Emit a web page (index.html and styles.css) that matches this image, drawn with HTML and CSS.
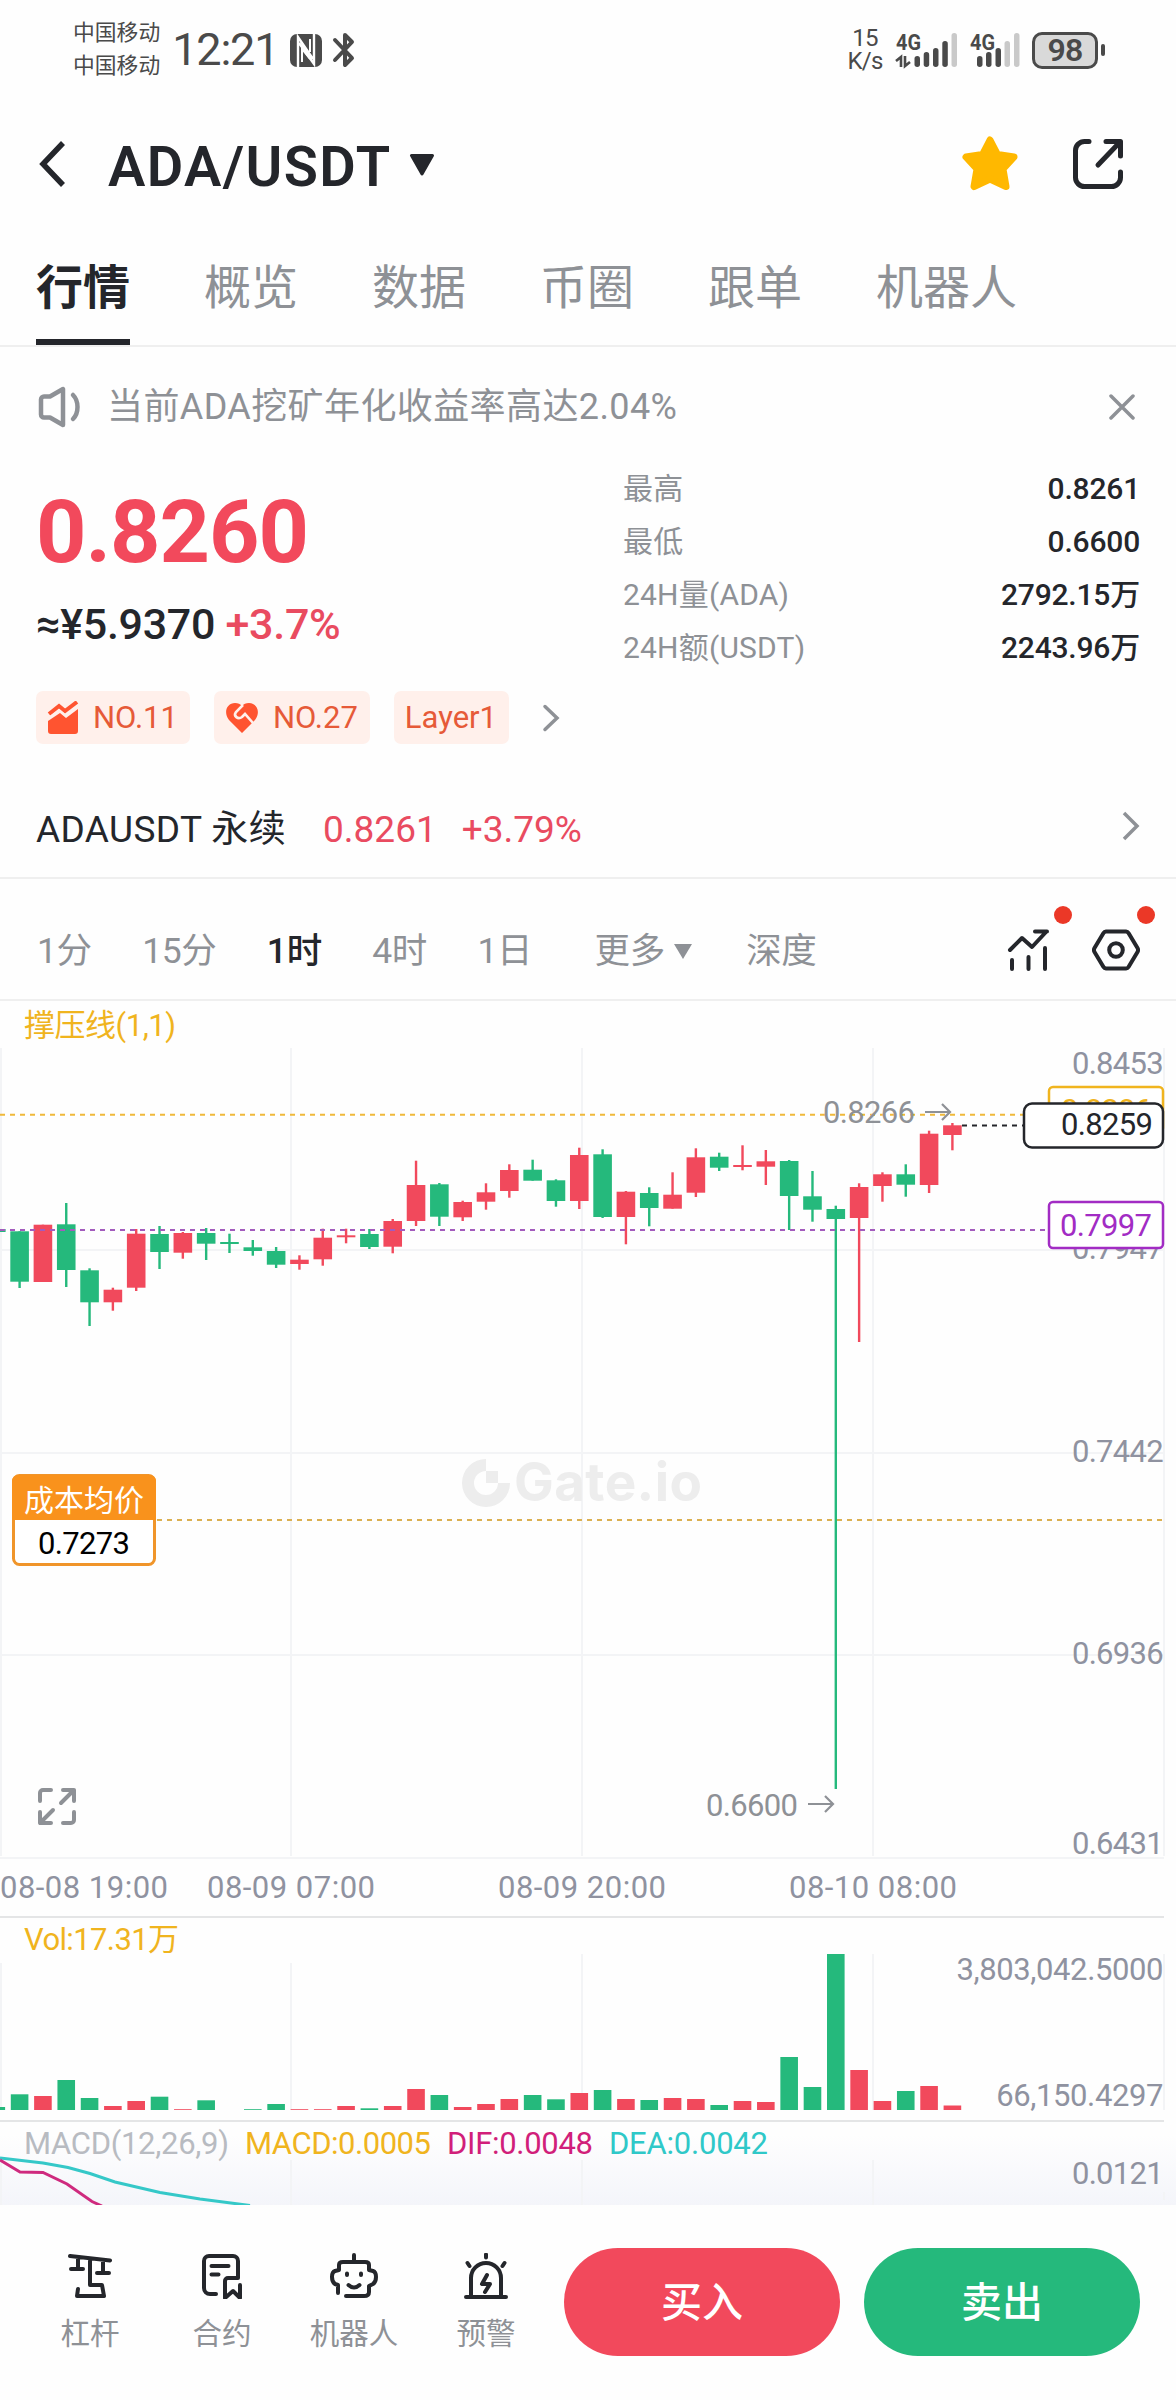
FILE: index.html
```
<!DOCTYPE html>
<html lang="zh-CN">
<head>
    <meta charset="UTF-8">
    <title>ADA/USDT</title>
    <link rel="stylesheet" href="styles.css">
</head>
<body>

<div class="status-bar">
    <div class="carriers">
        <span>中国移动</span>
        <span>中国移动</span>
    </div>
    <span class="clock">12:21</span>
    <svg class="nfc" width="32" height="33" viewBox="0 0 32 33">
        <rect width="32" height="33" rx="7" fill="#4a4a4a"/>
        <path d="M8 33V3l15 22M24 0v30L9 9" fill="none" stroke="#fefefe" stroke-width="2.4"/>
        <path d="M12 28V15l8 10M20 5v13" fill="none" stroke="#fefefe" stroke-width="2"/>
    </svg>
    <svg class="bluetooth" width="24" height="36" viewBox="0 0 24 36">
        <path d="M3 8l17 18-7 7V3l7 7L3 28" fill="none" stroke="#4a4a4a" stroke-width="4" stroke-linecap="round" stroke-linejoin="round"/>
    </svg>

    <div class="net-speed">
        <span>15</span>
        <span>K/s</span>
    </div>
    <svg class="signal" width="64" height="36" viewBox="0 0 64 36">
        <text class="net-type" x="1" y="18" textLength="25" lengthAdjust="spacingAndGlyphs">4G</text>
        <path d="M1 29l5-4v10M10 24v10l5-4" fill="none" stroke="#4a4a4a" stroke-width="2.6"/>
        <g fill="#4a4a4a">
            <rect x="19.500" y="24" width="5.500" height="11" rx="2.700"/>
            <rect x="28.700" y="20" width="5.500" height="15" rx="2.700"/>
            <rect x="38" y="16" width="5.500" height="19" rx="2.700"/>
            <rect x="47.300" y="9" width="5.500" height="26" rx="2.700"/>
        </g>
        <rect x="56.500" y="1" width="5.500" height="34" rx="2.700" fill="#c9c9c9"/>
    </svg>
    <svg class="signal second" width="52" height="36" viewBox="0 0 52 36">
        <text class="net-type" x="1" y="18" textLength="25" lengthAdjust="spacingAndGlyphs">4G</text>
        <g fill="#4a4a4a">
            <rect x="8" y="24" width="5.500" height="11" rx="2.700"/>
            <rect x="17" y="20" width="5.500" height="15" rx="2.700"/>
            <rect x="26.500" y="16" width="5.500" height="19" rx="2.700"/>
        </g>
        <g fill="#c9c9c9">
            <rect x="35.500" y="9" width="5.500" height="26" rx="2.700"/>
            <rect x="45" y="1" width="5.500" height="34" rx="2.700"/>
        </g>
    </svg>
    <span class="battery">98</span>
    <span class="battery-tip"></span>
</div>

<header class="pair-header">
    <svg class="back" width="28" height="48" viewBox="0 0 28 48">
        <path d="M26 3L6 24l20 21" fill="none" stroke="#24262b" stroke-width="5.500"/>
    </svg>
    <h1>ADA/USDT</h1>
    <svg class="caret" width="26" height="22" viewBox="0 0 26 22">
        <path d="M2.500 1.500h21L13 20z" fill="#24262b" stroke="#24262b" stroke-width="3" stroke-linejoin="round"/>
    </svg>
    <svg class="star" width="58" height="58" viewBox="0 0 58 58">
        <path d="M29 5l7.500 14.500L53 22 42 34l3 17.500L29 44l-16 7.500L16 34 5 22l16.500-2.500z" fill="#ffb800" stroke="#ffb800" stroke-width="7" stroke-linejoin="round"/>
    </svg>
    <svg class="share" width="52" height="52" viewBox="0 0 52 52" fill="none" stroke="#24262b" stroke-width="5" stroke-linecap="round" stroke-linejoin="round">
        <path d="M17 3.500h-4.500a9 9 0 0 0-9 9v27a9 9 0 0 0 9 9h27a9 9 0 0 0 9-9V34"/>
        <path d="M34 3.500h14.500V18M48 4L26 27"/>
    </svg>
</header>

<nav class="tabs">
    <a class="active">行情</a>
    <a>概览</a>
    <a>数据</a>
    <a>币圈</a>
    <a>跟单</a>
    <a>机器人</a>
</nav>

<div class="notice">
    <svg width="46" height="42" viewBox="0 0 46 42" fill="none" stroke="#8e9196" stroke-width="4.500" stroke-linecap="round" stroke-linejoin="round">
        <path d="M4 13.500a3 3 0 0 1 3-3h6L26 3v36l-13-7.500H7a3 3 0 0 1-3-3z"/>
        <path d="M36 9c6 6 6 18 0 24"/>
    </svg>
    <span>当前ADA挖矿年化收益率高达2.04%</span>
    <svg class="close" width="26" height="26" viewBox="0 0 26 26">
        <path d="M2 2l22 22M24 2L2 24" fill="none" stroke="#8e9196" stroke-width="3.500" stroke-linecap="round"/>
    </svg>
</div>

<section class="summary">
    <div class="price-block">
        <div class="price">0.8260</div>
        <div class="fiat">≈¥5.9370 <span class="up">+3.7%</span></div>
        <div class="tags">
            <span class="tag">
                <svg width="32" height="34" viewBox="0 0 32 34">
                    <path d="M1 20l12-8 6 5L31 8v22a3 3 0 0 1-3 3H4a3 3 0 0 1-3-3z" fill="#ff5430"/>
                    <path d="M2 13l10-8 6 5L30 1" fill="none" stroke="#ff5430" stroke-width="4"/>
                    <path d="M0 18l12.500-8.500 6 5L32 4" fill="none" stroke="#fff0eb" stroke-width="2"/>
                </svg>
                NO.11
            </span>
            <span class="tag">
                <svg width="34" height="32" viewBox="0 0 34 32">
                    <path d="M17 31L4 18C-2 10 2 1 10 1c3 0 5.500 1 7 3 1.500-2 4-3 7-3 8 0 12 9 6 17z" fill="#ff5430"/>
                    <path d="M18 3l-7 7c-3 4 2 8 6 5l3-3 8 9" fill="none" stroke="#fff0eb" stroke-width="2.600"/>
                </svg>
                NO.27
            </span>
            <span class="tag">Layer1</span>
            <svg class="more" width="18" height="28" viewBox="0 0 18 28">
                <path d="M3 2.500L15 14 3 25.500" fill="none" stroke="#8e9196" stroke-width="3.500" stroke-linecap="round"/>
            </svg>
        </div>
    </div>
    <dl class="stats">
        <dt>最高</dt><dd>0.8261</dd>
        <dt>最低</dt><dd>0.6600</dd>
        <dt>24H量(ADA)</dt><dd>2792.15万</dd>
        <dt>24H额(USDT)</dt><dd>2243.96万</dd>
    </dl>
</section>

<div class="perpetual">
    <span class="name">ADAUSDT 永续</span>
    <span class="up">0.8261</span>
    <span class="up">+3.79%</span>
    <svg width="18" height="30" viewBox="0 0 18 30">
        <path d="M2 2l13 13L2 28" fill="none" stroke="#8e9196" stroke-width="3.500"/>
    </svg>
</div>

<div class="intervals">
    <a>1分</a>
    <a>15分</a>
    <a class="active">1时</a>
    <a>4时</a>
    <a>1日</a>
    <a class="dropdown">更多
        <svg width="18" height="15" viewBox="0 0 18 15"><path d="M0 0h18L9 15z" fill="#8e9196"/></svg>
    </a>
    <a>深度</a>
    <div class="tool indicator">
        <svg width="44" height="44" viewBox="0 0 44 44" fill="none" stroke="#24262b" stroke-width="4" stroke-linecap="round" stroke-linejoin="round">
            <path d="M3 22L15 10l10 9L39 4M28 3.500h12"/>
            <path d="M5 32v9M21.500 29v12M38 20v21"/>
        </svg>
        <i class="dot"></i>
    </div>
    <div class="tool settings">
        <svg width="48" height="44" viewBox="0 0 48 44" fill="none" stroke="#24262b" stroke-width="4" stroke-linejoin="round">
            <path d="M14 3.500h20a3 3 0 0 1 2.500 1.500l9 15a4 4 0 0 1 0 4l-9 15a3 3 0 0 1-2.500 1.500H14a3 3 0 0 1-2.500-1.500l-9-15a4 4 0 0 1 0-4l9-15A3 3 0 0 1 14 3.500z"/>
            <circle cx="24" cy="22" r="6.800"/>
        </svg>
        <i class="dot"></i>
    </div>
</div>

<!-- candles: chart y starts right below the interval bar -->
<svg class="pane" id="candle-pane" width="1176" height="917" viewBox="0 1001 1176 917">
    <g class="grid">
        <path d="M1 1048V1856M291 1048V1856M582 1048V1856M873 1048V1856M1164 1048V1856"/>
        <path d="M0 1250H1164M0 1453H1164M0 1655H1164M0 1858H1164"/>
    </g>
    <path class="separator" d="M0 1917H1164"/>

    <g class="watermark">
        <path d="M486 1459a24 24 0 1 0 24 24h-12a12 12 0 1 1-12-12z"/>
        <path d="M486 1471h12v12h-12z"/>
        <text x="514" y="1501" textLength="188">Gate.io</text>
    </g>

    <text class="label gold" x="24" y="1036" textLength="152">撑压线(1,1)</text>
    <g class="label axis">
        <text x="1163" y="1074">0.8453</text>
        <text x="1163" y="1259">0.7947</text>
        <text x="1163" y="1462">0.7442</text>
        <text x="1163" y="1664">0.6936</text>
        <text x="1163" y="1854">0.6431</text>
    </g>

    <g id="candles"></g>

    <path class="dash gold-line" d="M0 1114.700H1024"/>
    <path class="dash purple-line" d="M0 1230H1048"/>
    <path class="dash black-line" d="M962 1125.500H1024"/>
    <path class="dash cost-line" d="M157 1520H1164"/>

    <g class="label muted">
        <text x="823" y="1123" textLength="92">0.8266</text>
        <text x="706" y="1816" textLength="92">0.6600</text>
        <path d="M925 1112h25m-8-8l8 8-8 8M808 1804h25m-8-8l8 8-8 8"/>
    </g>

    <g class="price-tag gold">
        <rect x="1049" y="1087" width="114" height="45" rx="4"/>
        <text x="1061" y="1121" textLength="91">0.8286</text>
    </g>
    <g class="price-tag black">
        <rect x="1024" y="1103.500" width="139" height="44" rx="8"/>
        <text x="1061" y="1134.500" textLength="92">0.8259</text>
    </g>
    <g class="price-tag purple">
        <rect x="1049" y="1202" width="114" height="46" rx="4"/>
        <text x="1060" y="1235.500" textLength="92">0.7997</text>
    </g>

    <g class="cost">
        <rect x="13.500" y="1475.500" width="141" height="89" rx="6"/>
        <path d="M12 1520v-39a6 6 0 0 1 6-6h132a6 6 0 0 1 6 6v39z"/>
        <text class="cost-title" x="24" y="1511" textLength="120">成本均价</text>
        <text x="38" y="1554" textLength="92">0.7273</text>
    </g>

    <g class="expand">
        <path d="M40 1801v-8a3 3 0 0 1 3-3h8M63 1790h11v11M74 1790l-13 13M40 1812v11h11M40 1823l13-13M74 1812v8a3 3 0 0 1-3 3h-8"/>
    </g>

    <g class="label dates">
        <text x="0" y="1898" textLength="168">08-08 19:00</text>
        <text x="207" y="1898" textLength="168">08-09 07:00</text>
        <text x="498" y="1898" textLength="168">08-09 20:00</text>
        <text x="789" y="1898" textLength="168">08-10 08:00</text>
    </g>
</svg>

<svg class="pane" width="1176" height="204" viewBox="0 1918 1176 204">
    <path class="grid" d="M1 1963V2110M291 1963V2110M582 1954V2110M873 1954V2110M1164 1954V2110"/>
    <text class="label gold" x="24" y="1950" textLength="155">Vol:17.31万</text>
    <g id="volumes"></g>
    <g class="label axis">
        <text class="long" x="1163" y="1980">3,803,042.5000</text>
        <text class="long" x="1163" y="2106">66,150.4297</text>
    </g>
    <path class="separator" d="M0 2121H1164"/>
</svg>

<svg class="pane" width="1176" height="83" viewBox="0 2122 1176 83">
    <defs>
        <linearGradient id="fade" x1="0" y1="0" x2="0" y2="1">
            <stop offset="0" stop-color="#fefefe"/>
            <stop offset="1" stop-color="#f4f5fa"/>
        </linearGradient>
    </defs>
    <rect x="0" y="2135" width="1176" height="70" fill="url(#fade)"/>
    <path class="grid" d="M1 2160V2205M291 2160V2205M582 2160V2205M873 2160V2205M1164 2192V2200"/>
    <text class="label faint" x="24" y="2154" textLength="205">MACD(12,26,9)</text>
    <text class="label gold" x="245" y="2154" textLength="186">MACD:0.0005</text>
    <text class="label magenta" x="447" y="2154" textLength="146">DIF:0.0048</text>
    <text class="label cyan" x="609" y="2154" textLength="159">DEA:0.0042</text>
    <text class="label axis" x="1163" y="2184">0.0121</text>
    <path class="line-dea" d="M0 2158L43 2163 68 2167.500 90 2173.500 115 2182 160 2192.500 200 2199 250 2205.500"/>
    <path class="line-dif" d="M0 2160L20 2172 43 2172.500 67 2184 92 2201.500 102 2206"/>
</svg>

<footer class="bottom-bar">
    <div class="shortcut">
        <svg width="46" height="46" viewBox="0 0 46 46">
            <path d="M3 3l40 4.500M11 5v11M4 16h12M36 8v12M30 20h12M23 6v26h12l2 11H10l1-7"/>
        </svg>
        <span>杠杆</span>
    </div>
    <div class="shortcut">
        <svg width="46" height="46" viewBox="0 0 46 46">
            <path d="M17 41h-6a6 6 0 0 1-6-6V8a5 5 0 0 1 5-5h24a5 5 0 0 1 5 5v17H29a3 3 0 0 0-3 3v17l8-7 7 7V32M12.500 13h17M12.500 21.500h7"/>
        </svg>
        <span>合约</span>
    </div>
    <div class="shortcut">
        <svg width="50" height="46" viewBox="0 0 50 46">
            <path d="M25 2v7M17 43h18q5 0 5-4v-6l4-2q3-2 3-7t-3-6l-4-1v-5q0-3-4-3H14q-4 0-4 3v5l-4 1q-3 1-3 6t3 7l3 1v8M19.500 32q5.500 5 11 0M18 20.500v1.500M32 20.500v1.500"/>
        </svg>
        <span>机器人</span>
    </div>
    <div class="shortcut">
        <svg width="46" height="46" viewBox="0 0 46 46">
            <path d="M3 44h40M8 43V25a15 15 0 0 1 30 0v18M23 1.500v3M4.500 10l2 3M41.500 10l-2 3M24 22l-5 9h8l-5 8"/>
        </svg>
        <span>预警</span>
    </div>
    <button class="buy">买入</button>
    <button class="sell">卖出</button>
</footer>

<script src="chart.js"></script>
</body>
</html>
```

FILE: styles.css
```
* {
    box-sizing: border-box;
}
body {
    margin: 0;
    width: 1176px;
    height: 2400px;
    overflow: hidden;
    background: #fefefe;
    color: #24262b;
    font-family: Roboto, "Noto Sans CJK SC", sans-serif;
    font-size: 31px;
}
svg {
    display: block;
    flex: none;
}
.up {
    color: #e94b60;
}

/* status bar */
.status-bar {
    height: 100px;
    padding: 0 71px 0 73px;
    display: flex;
    align-items: center;
    color: #4a4a4a;
}
.carriers {
    margin-top: -2px;
    display: flex;
    flex-direction: column;
    font-size: 21.8px;
    line-height: 33px;
}
.clock {
    width: 117px;
    padding-left: 12px;
    font-size: 45px;
    letter-spacing: -1.2px;
    line-height: 60px;
}
.nfc {
    margin-left: 13px;
}
.bluetooth {
    margin-left: 10px;
}
.net-speed {
    margin-left: auto;
    width: 36px;
    display: flex;
    flex-direction: column;
    align-items: center;
    font-size: 24px;
    line-height: 23px;
    letter-spacing: -0.8px;
}
.signal {
    margin-left: 12px;
    overflow: visible;
}
.signal.second {
    margin-left: 10px;
}
.net-type {
    font-size: 22px;
    font-weight: 700;
    fill: #4a4a4a;
}
.battery {
    margin-left: 11px;
    width: 66px;
    height: 37px;
    border: 3px solid #4a4a4a;
    border-radius: 10px;
    background: #d9d9d9;
    text-align: center;
    font-size: 32px;
    line-height: 31px;
    font-weight: 600;
    letter-spacing: -0.8px;
}
.battery-tip {
    width: 4px;
    height: 12px;
    margin-left: 3px;
    border-radius: 2px;
    background: #4a4a4a;
}

/* header */
.pair-header {
    height: 128px;
    padding: 0 52px 0 37px;
    display: flex;
    align-items: center;
}
.pair-header h1 {
    margin: 5px 0 0 43px;
    width: 286px;
    font-size: 56px;
    font-weight: 600;
    letter-spacing: 1.4px;
    line-height: 64px;
}
.caret {
    margin: 2px 0 0 15px;
}
.star {
    margin-left: auto;
}
.share {
    margin-left: 53px;
}

/* tabs */
.tabs {
    height: 119px;
    padding-left: 36px;
    border-bottom: 2px solid #efefef;
    display: flex;
    gap: 74px;
    font-size: 47px;
    line-height: 119px;
    color: #8e9196;
}
.tabs a {
    height: 117px;
}
.tabs .active {
    color: #24262b;
    font-weight: 700;
    border-bottom: 6px solid #24262b;
}

.notice {
    height: 120px;
    padding: 0 41px 0 37px;
    display: flex;
    align-items: center;
    font-size: 36px;
    letter-spacing: 0.4px;
    line-height: 50px;
    color: #8e9196;
}
.notice span {
    margin: -1px 0 0 24px;
}
.notice .close {
    margin-left: auto;
}

/* price + 24h stats */
.summary {
    height: 300px;
    padding: 0 36px 0 36px;
    display: flex;
    justify-content: space-between;
}
.price {
    height: 130px;
    line-height: 130px;
    font-size: 88px;
    font-weight: 700;
    letter-spacing: -1px;
    color: #f2495c;
}
.fiat {
    height: 54px;
    line-height: 54px;
    font-size: 43px;
    font-weight: 500;
    letter-spacing: -0.3px;
}
.tags {
    margin-top: 40px;
    display: flex;
    align-items: center;
    gap: 24px;
}
.tag {
    height: 53px;
    padding: 0 12px 0 11px;
    border-radius: 7px;
    background: #fff0eb;
    color: #e65a38;
    display: flex;
    align-items: center;
    gap: 14px;
}
.more {
    margin-left: 9px;
}
.stats {
    width: 517px;
    margin: -5px 0 0;
    display: grid;
    grid-template-columns: auto auto;
    grid-auto-rows: 53px;
    line-height: 53px;
    font-size: 30px;
}
.stats dt {
    color: #8e9196;
    letter-spacing: 0.2px;
}
.stats dd {
    margin: 0;
    text-align: right;
    font-weight: 500;
    letter-spacing: -0.2px;
}

.perpetual {
    height: 112px;
    padding: 16px 36px 0 36px;
    border-bottom: 2px solid #efefef;
    display: flex;
    align-items: center;
    font-size: 37px;
    line-height: 50px;
}
.perpetual .name {
    width: 287px;
    letter-spacing: 0.4px;
}
.perpetual .up + .up {
    margin-left: 25px;
}
.perpetual svg {
    margin: -8px 0 0 auto;
}

/* interval bar */
.intervals {
    height: 122px;
    padding: 22px 36px 0 37px;
    border-bottom: 2px solid #efefef;
    display: flex;
    align-items: center;
    gap: 50.5px;
    font-size: 35.5px;
    line-height: 50px;
    letter-spacing: -0.4px;
    color: #8e9196;
}
.intervals > a {
    margin-top: 2px;
}
.intervals .active {
    color: #24262b;
    font-weight: 500;
}
.intervals .dropdown {
    display: flex;
    align-items: center;
    gap: 9px;
    margin: 2px 4px 0 12px;
}
.tool {
    position: relative;
}
.indicator {
    margin-left: auto;
}
.settings {
    margin-left: -9px;
}
.dot {
    position: absolute;
    right: -21px;
    top: -22px;
    width: 18px;
    height: 18px;
    border-radius: 50%;
    background: #eb3827;
}
.settings .dot {
    right: -15px;
}

/* chart panes */
.pane text {
    font-size: 31px;
}
.grid {
    fill: none;
    stroke: #f3f4f6;
    stroke-width: 2;
}
.separator {
    stroke: #e4e5e6;
    stroke-width: 2;
}
.label.axis,
.label.axis text {
    text-anchor: end;
    fill: #8f92a0;
    letter-spacing: -0.7px;
}
.label.axis .long {
    letter-spacing: -0.4px;
}
.label.dates {
    fill: #8f92a0;
}
.label.muted {
    fill: #8e9196;
}
.label.muted path {
    fill: none;
    stroke: #8e9196;
    stroke-width: 2.2;
}
.label.gold {
    fill: #f0b41e;
}
.label.faint {
    fill: #b8bbc1;
}
.label.magenta {
    fill: #d11f7a;
}
.label.cyan {
    fill: #2fc8c8;
}
.pane .watermark text {
    font-family: Inter, sans-serif;
    font-size: 53px;
    font-weight: 700;
}
.watermark {
    fill: #ededed;
}
.dash {
    fill: none;
    stroke-width: 2;
    stroke-dasharray: 5 5;
}
.gold-line {
    stroke: #f0b93a;
}
.purple-line {
    stroke: #a35bbd;
}
.black-line {
    stroke: #24262b;
}
.cost-line {
    stroke: #dcb052;
}
.price-tag rect {
    fill: #fff;
    stroke-width: 2.5;
}
.price-tag.gold {
    fill: #f0b41e;
}
.price-tag.gold rect {
    stroke: #f0b41e;
}
.price-tag.black {
    fill: #24262b;
}
.price-tag.black rect {
    stroke: #24262b;
}
.price-tag.purple {
    fill: #a22cc4;
}
.price-tag.purple rect {
    stroke: #a22cc4;
}
.cost rect {
    fill: #fff;
    stroke: #f0952a;
    stroke-width: 3;
}
.cost path {
    fill: #f9921c;
}
.pane .cost-title {
    fill: #fff;
    font-size: 30px;
}
.expand path {
    fill: none;
    stroke: #8e9196;
    stroke-width: 4;
    stroke-linecap: round;
    stroke-linejoin: round;
}
.rise {
    fill: #f1495c;
}
.fall {
    fill: #25b97c;
}
.line-dea,
.line-dif {
    fill: none;
    stroke: #35c8c8;
    stroke-width: 3;
}
.line-dif {
    stroke: #cf2a7e;
}

/* bottom bar */
.bottom-bar {
    height: 195px;
    padding: 0 36px 0 24px;
    display: flex;
    align-items: flex-start;
}
.shortcut {
    width: 132px;
    padding-top: 48px;
    display: flex;
    flex-direction: column;
    align-items: center;
    font-size: 29.5px;
    line-height: 40px;
    color: #8e9196;
}
.shortcut svg {
    fill: none;
    stroke: #24262b;
    stroke-width: 4;
    stroke-linecap: round;
    stroke-linejoin: round;
}
.shortcut span {
    margin-top: 15px;
}
.bottom-bar button {
    width: 276px;
    height: 108px;
    margin: 43px 0 0 12px;
    padding: 2px 0 0;
    border: 0;
    border-radius: 54px;
    color: #fff;
    font: 500 41px/106px Roboto, "Noto Sans CJK SC", sans-serif;
}
.bottom-bar .buy {
    background: #f2495c;
}
.bottom-bar .sell {
    margin-left: 24px;
    background: #25b97c;
}
```

FILE: chart.js
```
const NS = "http://www.w3.org/2000/svg";
const STEP = 23.32;
const FIRST = 19.6;

// direction, then high, open/close top, open/close bottom, low (px below y = 1040)
const candles = [
    ["f", 191.3, 191.3, 241.7, 248], ["r", 184.7, 184.7, 242, 242], ["f", 163, 184.3, 230, 247],
    ["f", 228.3, 230.3, 262.3, 286], ["r", 247.7, 249.7, 262.3, 270.7], ["r", 189, 193.7, 247.7, 251],
    ["f", 186, 194, 212, 229], ["r", 192, 193, 212.7, 218.7], ["f", 188, 193, 203.7, 220],
    ["f", 193.7, 202, 204, 213], ["f", 200, 207.3, 211, 215.7], ["f", 207, 211, 224.7, 228],
    ["r", 215.3, 219.7, 224, 229.7], ["r", 188.7, 197.7, 219.3, 225.7], ["r", 188.7, 195.3, 197.3, 203.3],
    ["f", 189, 194, 207, 209], ["r", 179, 181, 206.7, 213.3], ["r", 120.7, 145, 181, 186],
    ["f", 143, 144.3, 176.7, 186], ["r", 160.7, 162, 177.3, 181], ["r", 143.3, 152.3, 161.7, 169.7],
    ["r", 124.3, 130, 151, 157.7], ["f", 119.7, 129.7, 140.7, 140.7], ["f", 139.3, 140.3, 161, 166.7],
    ["r", 107.7, 115, 161, 169], ["f", 109.3, 114.3, 177, 178], ["r", 151, 151.7, 177, 204.3],
    ["f", 147.3, 153, 168, 186.3], ["r", 132.3, 154.7, 168.7, 168.7], ["r", 108.3, 117.3, 152.7, 157],
    ["f", 112.7, 116.7, 127.7, 131], ["r", 105.3, 125, 127, 130.3], ["r", 110, 121.3, 126.7, 145],
    ["f", 120, 121, 156, 190], ["f", 131, 156.3, 169.7, 181.7], ["f", 165.7, 169, 179, 749],
    ["r", 143.3, 147, 178, 302], ["r", 132.3, 134.3, 146, 161.7], ["f", 124.3, 134.3, 144.7, 156.7],
    ["r", 90.7, 93.7, 145, 153], ["r", 83, 85.3, 95, 110.3]
];

const volumes = [
    ["f", 15.7], ["r", 14], ["f", 30], ["f", 12], ["r", 4], ["r", 9], ["f", 13.3], ["r", 0.8],
    ["f", 9.7], ["f", 0], ["f", 0.8], ["f", 6], ["r", 0.8], ["r", 0.8], ["r", 4], ["f", 1.7],
    ["r", 4], ["r", 21], ["f", 15], ["r", 3], ["r", 6], ["r", 11], ["f", 15], ["f", 10.7],
    ["r", 17], ["f", 20], ["r", 11], ["f", 10], ["r", 12], ["r", 11], ["f", 5], ["r", 9],
    ["r", 8], ["f", 53], ["f", 23], ["f", 156], ["r", 40], ["r", 9], ["f", 19], ["r", 24], ["r", 4.5]
];

function bar(parent, dir, cx, width, top, bottom) {
    const rect = document.createElementNS(NS, "rect");
    rect.setAttribute("class", dir === "r" ? "rise" : "fall");
    rect.setAttribute("x", cx - width / 2);
    rect.setAttribute("y", top);
    rect.setAttribute("width", width);
    rect.setAttribute("height", bottom - top);
    parent.appendChild(rect);
}

const candleGroup = document.getElementById("candles");
bar(candleGroup, "f", -3.7, 18.6, 1229, 1232);
candles.forEach(([dir, high, top, bottom, low], i) => {
    const cx = FIRST + i * STEP;
    bar(candleGroup, dir, cx, 2.4, 1040 + high, 1040 + low);
    bar(candleGroup, dir, cx, 18.6, 1040 + top, 1040 + bottom);
});

const volumeGroup = document.getElementById("volumes");
bar(volumeGroup, "f", -3.7, 17.6, 2107, 2110);
volumes.forEach(([dir, height], i) => {
    bar(volumeGroup, dir, FIRST + i * STEP, 17.6, 2110 - height, 2110);
});
```
